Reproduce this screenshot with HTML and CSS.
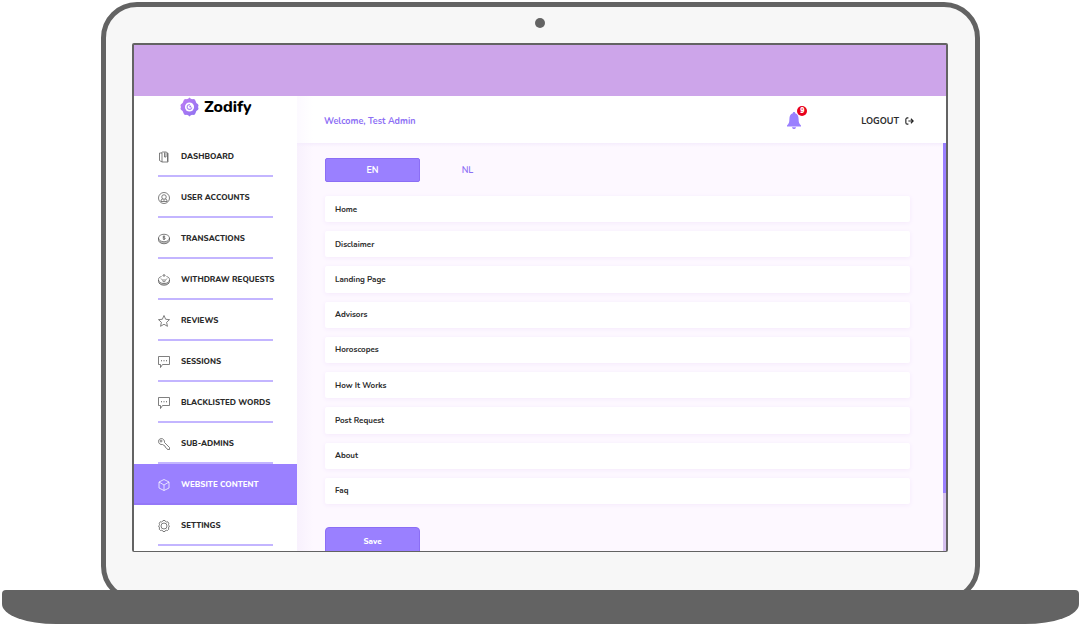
FILE: index.html
```html
<!DOCTYPE html>
<html lang="en">

<head>
    <meta charset="UTF-8">
    <title>Zodify - Website content</title>
    <link rel="stylesheet" href="styles.css">
</head>

<body>

    <div class="lid">
        <div class="camera"></div>

        <div class="screen">
            <div class="banner"></div>

            <div class="app">
                <aside class="sidebar">
                    <a class="logo" href="#">
                        <svg viewBox="0 0 20 20">
                            <defs>
                                <linearGradient id="purple" x1="0" y1="0" x2="1" y2="1">
                                    <stop offset="0" stop-color="#c07cf5" />
                                    <stop offset="1" stop-color="#8b72f0" />
                                </linearGradient>
                            </defs>
                            <path fill="url(#purple)" d="M10 0q1.500 2 3.500 1.700 2.500-.3 3 2.300.2 2 2.500 3 1 1.300 0 3 1 1.700 0 3-2.300 1-2.500 3-.5 2.600-3 2.300Q11.500 18 10 20q-1.500-2-3.500-1.700-2.500.3-3-2.300-.2-2-2.500-3-1-1.300 0-3-1-1.700 0-3 2.300-1 2.500-3 .5-2.600 3-2.300Q8.500 2 10 0z" />
                            <circle cx="10" cy="10" r="4.800" fill="#fff" />
                            <path d="M10.500 7.600a2.500 2.500 0 1 0 2 2.900" fill="none" stroke="#b08cf5" stroke-width="1.300" />
                            <circle cx="10.800" cy="9.400" r="1" fill="#a47af2" />
                        </svg>
                        <span>Zodify</span>
                    </a>

                    <nav class="menu">
                        <a href="#">
                            <svg viewBox="0 0 24 24"><path d="M8 4H3v15l5 3h12V5l-3-3h-7C8 2 7 3 8 4zv18M13 3v9M16 3v9M13 12h3M19 4v17" /></svg>
                            <span>DASHBOARD</span>
                        </a>
                        <a href="#">
                            <svg viewBox="0 0 24 24"><circle cx="12" cy="12" r="11" /><circle cx="12" cy="10" r="4.500" /><path d="M9 14l-3 2v3h12v-3l-3-2M10 15l2 2 2-2" /></svg>
                            <span>USER ACCOUNTS</span>
                        </a>
                        <a href="#">
                            <svg viewBox="0 0 24 24"><ellipse cx="12" cy="10" rx="11" ry="7.500" /><path d="M1 10v4c0 4 5 7.500 11 7.500S23 18 23 14v-4M4 16v3M8 18v3M12 18v3M16 18v3M20 16v3M14.500 7.500c-2-1.500-5-1-5 .5 0 2 5 1 5 3 0 1.500-3 2-5 .5M12 5v9" /></svg>
                            <span>TRANSACTIONS</span>
                        </a>
                        <a href="#">
                            <svg viewBox="0 0 24 24"><path d="M7 5C3 6 1 8 1 11v4c0 4 5 7.500 11 7.500S23 19 23 15v-4c0-3-2-5-6-6M1 12c0 4 5 7 11 7s11-3 11-7M4 17v3M8 19v3M12 19v3M16 19v3M20 17v3M12 1v5M9 4l3-3 3 3M6 9l3 3M18 9l-3 3M9 14l3-3 3 3-3 2z" /></svg>
                            <span>WITHDRAW REQUESTS</span>
                        </a>
                        <a href="#">
                            <svg viewBox="0 0 24 24"><path d="M12 1l3.300 7.500 7.700.8-5.800 5.300 1.700 8-6.900-4.100-6.900 4.100 1.700-8L1 9.300l7.700-.8z" /></svg>
                            <span>REVIEWS</span>
                        </a>
                        <a href="#">
                            <svg viewBox="0 0 24 24"><path d="M1 1h22v16H9l-4 6v-6H1z" /><path class="dots" d="M6 9.500h2M11 9.500h2M16 9.500h2" /></svg>
                            <span>SESSIONS</span>
                        </a>
                        <a href="#">
                            <svg viewBox="0 0 24 24"><path d="M1 1h22v16H9l-4 6v-6H1z" /><path class="dots" d="M6 9.500h2M11 9.500h2M16 9.500h2" /></svg>
                            <span>BLACKLISTED WORDS</span>
                        </a>
                        <a href="#">
                            <svg viewBox="0 0 24 24"><path d="M13 9l10 10v4h-4l-2-3-2-1-1-3-5-3c-4 1-8-2-8-6s3-6 6-6 7 4 6 8z" /><circle cx="6" cy="6" r="2" /></svg>
                            <span>SUB-ADMINS</span>
                        </a>
                        <a class="active" href="#">
                            <svg viewBox="0 0 24 24"><path d="M12 1l10 5v12l-10 5-10-5V6zM2 6l10 6 10-6M12 12v11" /></svg>
                            <span>WEBSITE CONTENT</span>
                        </a>
                        <a href="#">
                            <svg viewBox="0 0 24 24"><path d="M10 1h4l1 2 2 1 2.500-.5 2 3L21 9l.5 2L23 12l-1.500 2-.5 2 .5 2.500-2.500 2.500-2.500-.5-1.500.5-1 2h-4l-1-2-1.500-.5-2.500.5L2.500 18.500 3 16l-.5-2L1 12l1.500-1L3 9l-.5-2.500 2-3L7 4l2-1z" /><circle cx="12" cy="12" r="6" /></svg>
                            <span>SETTINGS</span>
                        </a>
                    </nav>
                </aside>

                <main>
                    <header>
                        <p class="welcome">Welcome, Test Admin</p>
                        <button class="bell" aria-label="Notifications">
                            <svg viewBox="0 0 14 17"><path d="M7 0c.8 0 1.200.5 1.200 1.300C10.600 2 11.600 4 11.600 7c0 3.500.7 5 2.400 6.500V14.500H0v-1C1.700 12 2.400 10.500 2.400 7c0-3 1-5 3.400-5.700C5.800.5 6.200 0 7 0zM5 15.200h4C9 16.400 8 17 7 17s-2-.6-2-1.800z" /></svg>
                            <span class="badge">9</span>
                        </button>
                        <a class="logout" href="#">
                            <span>LOGOUT</span>
                            <svg viewBox="0 0 16 14"><path d="M6 1.500H4a2.500 2.500 0 0 0-2.500 2.500v6A2.500 2.500 0 0 0 4 12.500h2M6 7h8M10.500 3L14.500 7l-4 4" /></svg>
                        </a>
                    </header>

                    <section class="content">
                        <div class="tabs">
                            <button class="valgt">EN</button>
                            <button>NL</button>
                        </div>

                        <div class="pages">
                            <button>Home</button>
                            <button>Disclaimer</button>
                            <button>Landing Page</button>
                            <button>Advisors</button>
                            <button>Horoscopes</button>
                            <button>How It Works</button>
                            <button>Post Request</button>
                            <button>About</button>
                            <button>Faq</button>
                        </div>

                        <button class="save">Save</button>
                    </section>
                </main>
            </div>
        </div>
    </div>

    <div class="base"></div>

</body>

</html>
```
FILE: styles.css
```css
* {
    box-sizing: border-box;
}

body {
    margin: 0;
    padding: 2px;
    height: 100vh;
    display: flex;
    flex-direction: column;
    background-color: #fff;
    font-family: Nunito, Lato, sans-serif;
    font-size: 8px;
    font-weight: 800;
    color: #2a2a2a;
}

a {
    color: inherit;
    text-decoration: none;
}

button {
    border: none;
    padding: 0;
    background: none;
    font: inherit;
    color: inherit;
}

/* laptop */

.lid {
    flex: 1;
    min-height: 0;
    display: flex;
    flex-direction: column;
    margin: 0 99px -12px;
    padding: 11px 27px 45px 26px;
    border: 5px solid #636363;
    border-radius: 36px;
    background-color: #f7f7f7;
}

.camera {
    width: 10px;
    height: 10px;
    margin: 0 auto 15px;
    border-radius: 50%;
    background-color: #636363;
}

.screen {
    flex: 1;
    min-height: 0;
    display: flex;
    flex-direction: column;
    overflow: hidden;
    border: 2px solid #636363;
    border-bottom-width: 1px;
    border-radius: 2px;
    background-color: #fff;
}

.base {
    position: relative;
    height: 34px;
    flex-shrink: 0;
    border-radius: 4px 4px 54px 54px / 4px 4px 20px 20px;
    background-color: #636363;
}

.banner {
    height: 51px;
    flex-shrink: 0;
    background-color: #cda5ea;
}

.app {
    flex: 1;
    min-height: 0;
    display: flex;
}

/* sidebar */

.sidebar {
    width: 163px;
    flex-shrink: 0;
}

.logo {
    display: flex;
    align-items: center;
    gap: 5px;
    height: 22px;
    padding-left: 46px;
    font-size: 16px;
    color: #000;
}

.logo svg {
    width: 19px;
    height: 20px;
}

.menu {
    display: flex;
    flex-direction: column;
    height: 410px;
    margin-top: 18px;
}

.menu a {
    flex: 1;
    display: flex;
    align-items: center;
    gap: 11px;
    margin: 0 24px;
    padding-top: 2px;
    border-bottom: 2px solid #c3b5ff;
    white-space: nowrap;
}

.menu svg {
    width: 12px;
    height: 12px;
    flex-shrink: 0;
    fill: none;
    stroke: #555;
    stroke-width: 1.5;
}

.menu .dots {
    stroke-width: 2;
}

.menu .active {
    margin: 0;
    padding: 2px 24px 0;
    border-color: #9478f8;
    background-color: #9a80ff;
    color: #fff;
}

.menu .active svg {
    stroke: #fff;
}

/* main */

main {
    flex: 1;
    min-width: 0;
    display: flex;
    flex-direction: column;
}

header {
    display: flex;
    align-items: center;
    height: 47px;
    flex-shrink: 0;
    padding: 2px 32px 0 27px;
    background: linear-gradient(to right, #fcf9ff, #fff 16px);
}

.welcome {
    margin: 0 auto 0 0;
    font-size: 9px;
    font-weight: 700;
    color: #8d6ff5;
}

.bell {
    position: relative;
    width: 14px;
    height: 17px;
    margin-right: 60px;
}

.bell svg {
    display: block;
    fill: #9a80ff;
}

.badge {
    position: absolute;
    top: -6px;
    right: -6px;
    width: 10px;
    height: 10px;
    border-radius: 50%;
    background-color: #e8001c;
    color: #fff;
    font-size: 7px;
    font-weight: 900;
    line-height: 10px;
}

.logout {
    display: flex;
    align-items: center;
    gap: 6px;
    font-size: 9px;
    font-weight: 700;
}

.logout svg {
    width: 9px;
    height: 8px;
    fill: none;
    stroke: #222;
    stroke-width: 2;
}

.content {
    flex: 1;
    min-height: 0;
    overflow: hidden;
    padding: 15px 36px 0 28px;
    background:
        linear-gradient(#9a80ff, #9a80ff) right top / 3px 350px no-repeat,
        linear-gradient(#d5c0ee, #d5c0ee) right top / 3px 100% no-repeat,
        linear-gradient(#f5edfd, transparent) left top / 100% 4px no-repeat,
        linear-gradient(to right, #f8f1fd, #fdf8ff 16px);
}

.tabs {
    display: flex;
    margin-bottom: 14px;
}

.tabs button {
    width: 95px;
    height: 24px;
    border-radius: 2px;
    font-size: 9px;
    font-weight: 600;
    color: #8d6ff5;
}

.tabs .valgt {
    border: 1px solid #8b6ef5;
    background-color: #9a80ff;
    color: #fff;
    font-weight: 700;
}

.pages {
    display: grid;
    grid-auto-rows: 1fr;
    gap: 9px;
    height: 308px;
}

.pages button {
    padding-left: 10px;
    border-radius: 2px;
    background-color: #fff;
    box-shadow: 0 1px 5px #f5e9fc;
    text-align: left;
    font-weight: 700;
}

.save {
    width: 95px;
    height: 28px;
    margin-top: 23px;
    border: 1px solid #8b6ef5;
    border-radius: 4px;
    background-color: #9a80ff;
    color: #fff;
}
```
